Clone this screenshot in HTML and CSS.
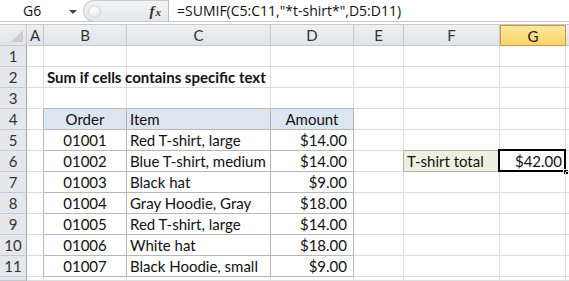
FILE: index.html
```html
<!DOCTYPE html>
<html lang="en">
<head>
  <meta charset="UTF-8">
  <title>SUMIF contains text</title>
  <link rel="stylesheet" href="styles.css">
</head>
<body>

  <div class="formula-bar">
    <div class="name-box">G6<span class="caret"></span></div>
    <div class="fx-area">
      <span class="knob"></span>
      <span class="fx"><i>f</i><i class="x">x</i></span>
    </div>
    <div class="formula">=SUMIF(C5:C11,"*t-shirt*",D5:D11)</div>
  </div>

  <div class="sheet">
    <!-- column headers -->
    <div class="hd corner"></div>
    <div class="hd">A</div>
    <div class="hd">B</div>
    <div class="hd">C</div>
    <div class="hd">D</div>
    <div class="hd">E</div>
    <div class="hd">F</div>
    <div class="hd active">G</div>
    <div class="hd"></div>

    <!-- 1 -->
    <div class="rh">1</div>
    <div class="c"></div><div class="c"></div><div class="c"></div><div class="c"></div>
    <div class="c"></div><div class="c"></div><div class="c"></div><div class="c"></div>

    <!-- 2 -->
    <div class="rh">2</div>
    <div class="c"></div>
    <div class="c title">Sum if cells contains specific text</div>
    <div class="c"></div><div class="c"></div><div class="c"></div>
    <div class="c"></div><div class="c"></div><div class="c"></div>

    <!-- 3 -->
    <div class="rh">3</div>
    <div class="c"></div>
    <div class="c tt"></div><div class="c tt"></div><div class="c tt"></div>
    <div class="c"></div><div class="c"></div><div class="c"></div><div class="c"></div>

    <!-- 4 -->
    <div class="rh">4</div>
    <div class="c tl"></div>
    <div class="c t th mid">Order</div>
    <div class="c t th">Item</div>
    <div class="c t th mid">Amount</div>
    <div class="c"></div><div class="c"></div><div class="c"></div><div class="c"></div>

    <!-- 5 -->
    <div class="rh">5</div>
    <div class="c tl"></div>
    <div class="c t mid">01001</div>
    <div class="c t">Red T-shirt, large</div>
    <div class="c t num">$14.00</div>
    <div class="c"></div><div class="c bt"></div><div class="c"></div><div class="c"></div>

    <!-- 6 -->
    <div class="rh">6</div>
    <div class="c tl"></div>
    <div class="c t mid">01002</div>
    <div class="c t">Blue T-shirt, medium</div>
    <div class="c t num">$14.00</div>
    <div class="c bl"></div>
    <div class="c label">T-shirt total</div>
    <div class="c num selected">$42.00<span class="handle"></span></div>
    <div class="c"></div>

    <!-- 7 -->
    <div class="rh">7</div>
    <div class="c tl"></div>
    <div class="c t mid">01003</div>
    <div class="c t">Black hat</div>
    <div class="c t num">$9.00</div>
    <div class="c"></div><div class="c"></div><div class="c"></div><div class="c"></div>

    <!-- 8 -->
    <div class="rh">8</div>
    <div class="c tl"></div>
    <div class="c t mid">01004</div>
    <div class="c t">Gray Hoodie, Gray</div>
    <div class="c t num">$18.00</div>
    <div class="c"></div><div class="c"></div><div class="c"></div><div class="c"></div>

    <!-- 9 -->
    <div class="rh">9</div>
    <div class="c tl"></div>
    <div class="c t mid">01005</div>
    <div class="c t">Red T-shirt, large</div>
    <div class="c t num">$14.00</div>
    <div class="c"></div><div class="c"></div><div class="c"></div><div class="c"></div>

    <!-- 10 -->
    <div class="rh">10</div>
    <div class="c tl"></div>
    <div class="c t mid">01006</div>
    <div class="c t">White hat</div>
    <div class="c t num">$18.00</div>
    <div class="c"></div><div class="c"></div><div class="c"></div><div class="c"></div>

    <!-- 11 -->
    <div class="rh">11</div>
    <div class="c tl"></div>
    <div class="c t mid">01007</div>
    <div class="c t">Black Hoodie, small</div>
    <div class="c t num">$9.00</div>
    <div class="c"></div><div class="c"></div><div class="c"></div><div class="c"></div>

    <!-- 12, only its top shows -->
    <div class="rh"></div>
    <div class="c"></div><div class="c"></div><div class="c"></div><div class="c"></div>
    <div class="c"></div><div class="c"></div><div class="c"></div><div class="c"></div>
  </div>

</body>
</html>
```

FILE: styles.css
```css
* {
  box-sizing: border-box;
}

html,
body {
  height: 281px;
  overflow: hidden;
}

body {
  margin: 0;
  background-color: #fff;
  font-family: Lato, "Liberation Sans", sans-serif;
}

/* formula bar */

.formula-bar {
  display: flex;
  height: 22px;
  border-bottom: 1px solid #c6c9ce;
  background: #fff;
}

.name-box {
  width: 83px;
  padding-left: 23px;
  font-family: "Open Sans", sans-serif;
  font-size: 14px;
  line-height: 22px;
  color: #111;
  position: relative;
}

.caret {
  position: absolute;
  left: 69px;
  top: 10px;
  border-left: 4px solid transparent;
  border-right: 4px solid transparent;
  border-top: 4px solid #444;
}

.fx-area {
  width: 86px;
  height: 22px;
  border: 1px solid #c9cbcf;
  border-right-color: #b6b9be;
  border-radius: 11px 0 0 11px;
  background: linear-gradient(#f4f5f6, #e3e5e8);
  display: flex;
  align-items: center;
  justify-content: space-between;
  padding: 0 7px 0 4px;
}

.knob {
  width: 13px;
  height: 13px;
  border-radius: 50%;
  border: 1px solid #d2d4d7;
  background: radial-gradient(circle at 40% 35%, #fff, #dfe1e4);
}

.fx {
  font-family: "Liberation Serif", serif;
  font-weight: bold;
  font-size: 15px;
  color: #333;
}

.fx .x {
  font-size: 11px;
  margin-left: 1px;
}

.formula {
  padding-left: 8px;
  font-family: "Open Sans", sans-serif;
  font-size: 14px;
  line-height: 22px;
  color: #111;
  white-space: nowrap;
}

/* sheet grid */

.sheet {
  margin-top: 2px;
  display: grid;
  grid-template-columns: 27px 17px 83px 144px 83px 50px 96px 66px 20px;
  grid-template-rows: repeat(12, 21px) 4px;
  border-top: 1px solid #c6c9ce;
  font-size: 15px;
  color: #111;
}

.hd,
.rh {
  background: linear-gradient(#eef0f3, #e1e4e8);
  border-right: 1px solid #c6c9ce;
  border-bottom: 1px solid #c6c9ce;
  color: #333;
  text-align: center;
  line-height: 21px;
  overflow: hidden;
}

.rh {
  background: #e4e7eb;
  border-right-color: #9fa6ae;
}

.corner {
  position: relative;
}

.corner::after {
  content: "";
  position: absolute;
  right: 3px;
  bottom: 3px;
  border-left: 12px solid transparent;
  border-bottom: 12px solid #c9cdd2;
}

.hd.active {
  background: linear-gradient(#fde8a0, #f8d468);
  border: 1px solid #c99a3c;
  color: #222;
}

.c {
  border-right: 1px solid #dadcdd;
  border-bottom: 1px solid #dadcdd;
  padding: 0 3px;
  line-height: 21px;
  white-space: nowrap;
  position: relative;
}

.title {
  font-weight: bold;
}

.t {
  border-right-color: #b8b8b8;
  border-bottom-color: #b8b8b8;
}

.tt {
  border-bottom-color: #b8b8b8;
}

.tl {
  border-right-color: #b8b8b8;
}

.th {
  background-color: #dce6f1;
}

.mid {
  text-align: center;
}

.num {
  text-align: right;
}

.t.num {
  padding-right: 6px;
}

.bt {
  border-bottom-color: #b0b0b0;
}

.bl {
  border-right-color: #b0b0b0;
}

.label {
  background-color: #ebf1de;
  border-right-color: #b0b0b0;
  border-bottom-color: #b0b0b0;
}

.selected::before {
  content: "";
  position: absolute;
  left: -2px;
  top: -2px;
  right: -1px;
  bottom: -1px;
  border: 2px solid #000;
}

.handle {
  position: absolute;
  right: -4px;
  bottom: -4px;
  width: 6px;
  height: 6px;
  background: #000;
  border: 1px solid #fff;
}
```
